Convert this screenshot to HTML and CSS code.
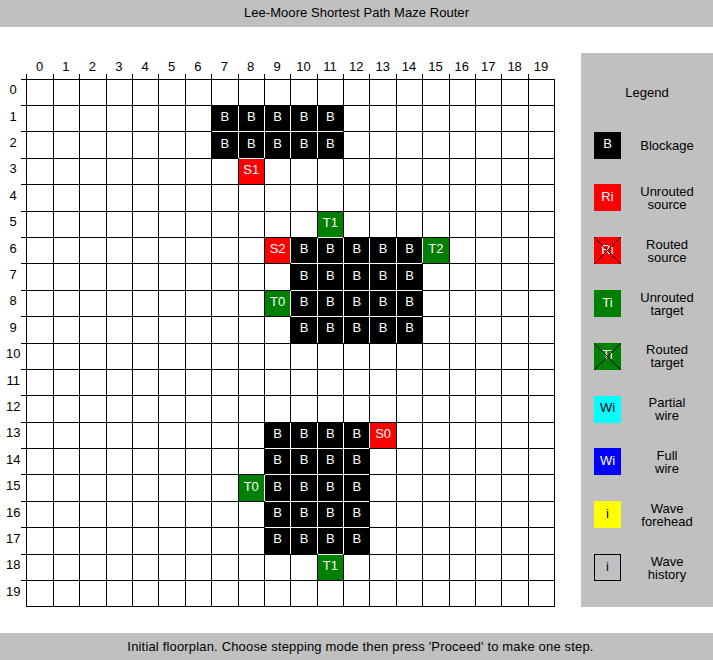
FILE: index.html
```html
<!DOCTYPE html>
<html>
<head>
<meta charset="utf-8">
<title>Lee-Moore Shortest Path Maze Router</title>
<link rel="stylesheet" href="styles.css">
</head>
<body>
<header class="bar title">Lee-Moore Shortest Path Maze Router</header>
<main class="main">
  <section class="chart">
    <div class="corner"></div>
    <div class="cols">
      <span>0</span><span>1</span><span>2</span><span>3</span><span>4</span><span>5</span><span>6</span><span>7</span><span>8</span><span>9</span><span>10</span><span>11</span><span>12</span><span>13</span><span>14</span><span>15</span><span>16</span><span>17</span><span>18</span><span>19</span>
    </div>
    <div class="rows">
      <span>0</span><span>1</span><span>2</span><span>3</span><span>4</span><span>5</span><span>6</span><span>7</span><span>8</span><span>9</span><span>10</span><span>11</span><span>12</span><span>13</span><span>14</span><span>15</span><span>16</span><span>17</span><span>18</span><span>19</span>
    </div>
    <div class="board">
      <span></span><span></span><span></span><span></span><span></span><span></span><span></span><span></span><span></span><span></span><span></span><span></span><span></span><span></span><span></span><span></span><span></span><span></span><span></span><span></span>
      <span></span><span></span><span></span><span></span><span></span><span></span><span></span><span class="k">B</span><span class="k">B</span><span class="k">B</span><span class="k">B</span><span class="k">B</span><span></span><span></span><span></span><span></span><span></span><span></span><span></span><span></span>
      <span></span><span></span><span></span><span></span><span></span><span></span><span></span><span class="k">B</span><span class="k">B</span><span class="k">B</span><span class="k">B</span><span class="k">B</span><span></span><span></span><span></span><span></span><span></span><span></span><span></span><span></span>
      <span></span><span></span><span></span><span></span><span></span><span></span><span></span><span></span><span class="s">S1</span><span></span><span></span><span></span><span></span><span></span><span></span><span></span><span></span><span></span><span></span><span></span>
      <span></span><span></span><span></span><span></span><span></span><span></span><span></span><span></span><span></span><span></span><span></span><span></span><span></span><span></span><span></span><span></span><span></span><span></span><span></span><span></span>
      <span></span><span></span><span></span><span></span><span></span><span></span><span></span><span></span><span></span><span></span><span></span><span class="t">T1</span><span></span><span></span><span></span><span></span><span></span><span></span><span></span><span></span>
      <span></span><span></span><span></span><span></span><span></span><span></span><span></span><span></span><span></span><span class="s">S2</span><span class="k">B</span><span class="k">B</span><span class="k">B</span><span class="k">B</span><span class="k">B</span><span class="t">T2</span><span></span><span></span><span></span><span></span>
      <span></span><span></span><span></span><span></span><span></span><span></span><span></span><span></span><span></span><span></span><span class="k">B</span><span class="k">B</span><span class="k">B</span><span class="k">B</span><span class="k">B</span><span></span><span></span><span></span><span></span><span></span>
      <span></span><span></span><span></span><span></span><span></span><span></span><span></span><span></span><span></span><span class="t">T0</span><span class="k">B</span><span class="k">B</span><span class="k">B</span><span class="k">B</span><span class="k">B</span><span></span><span></span><span></span><span></span><span></span>
      <span></span><span></span><span></span><span></span><span></span><span></span><span></span><span></span><span></span><span></span><span class="k">B</span><span class="k">B</span><span class="k">B</span><span class="k">B</span><span class="k">B</span><span></span><span></span><span></span><span></span><span></span>
      <span></span><span></span><span></span><span></span><span></span><span></span><span></span><span></span><span></span><span></span><span></span><span></span><span></span><span></span><span></span><span></span><span></span><span></span><span></span><span></span>
      <span></span><span></span><span></span><span></span><span></span><span></span><span></span><span></span><span></span><span></span><span></span><span></span><span></span><span></span><span></span><span></span><span></span><span></span><span></span><span></span>
      <span></span><span></span><span></span><span></span><span></span><span></span><span></span><span></span><span></span><span></span><span></span><span></span><span></span><span></span><span></span><span></span><span></span><span></span><span></span><span></span>
      <span></span><span></span><span></span><span></span><span></span><span></span><span></span><span></span><span></span><span class="k">B</span><span class="k">B</span><span class="k">B</span><span class="k">B</span><span class="s">S0</span><span></span><span></span><span></span><span></span><span></span><span></span>
      <span></span><span></span><span></span><span></span><span></span><span></span><span></span><span></span><span></span><span class="k">B</span><span class="k">B</span><span class="k">B</span><span class="k">B</span><span></span><span></span><span></span><span></span><span></span><span></span><span></span>
      <span></span><span></span><span></span><span></span><span></span><span></span><span></span><span></span><span class="t">T0</span><span class="k">B</span><span class="k">B</span><span class="k">B</span><span class="k">B</span><span></span><span></span><span></span><span></span><span></span><span></span><span></span>
      <span></span><span></span><span></span><span></span><span></span><span></span><span></span><span></span><span></span><span class="k">B</span><span class="k">B</span><span class="k">B</span><span class="k">B</span><span></span><span></span><span></span><span></span><span></span><span></span><span></span>
      <span></span><span></span><span></span><span></span><span></span><span></span><span></span><span></span><span></span><span class="k">B</span><span class="k">B</span><span class="k">B</span><span class="k">B</span><span></span><span></span><span></span><span></span><span></span><span></span><span></span>
      <span></span><span></span><span></span><span></span><span></span><span></span><span></span><span></span><span></span><span></span><span></span><span class="t">T1</span><span></span><span></span><span></span><span></span><span></span><span></span><span></span><span></span>
      <span></span><span></span><span></span><span></span><span></span><span></span><span></span><span></span><span></span><span></span><span></span><span></span><span></span><span></span><span></span><span></span><span></span><span></span><span></span><span></span>
    </div>
  </section>
  <aside class="legend">
    <div class="legend-title">Legend</div>
    <div class="item"><div class="sw sw-block">B</div><div class="lbl">Blockage</div></div>
    <div class="item"><div class="sw sw-src">Ri</div><div class="lbl">Unrouted<br>source</div></div>
    <div class="item"><div class="sw sw-src crossed">Ri<svg class="x" width="27" height="27" viewBox="0 0 27 27"><path d="M0 0L27 27M27 0L0 27" stroke="#000" stroke-width="1" fill="none"/></svg></div><div class="lbl">Routed<br>source</div></div>
    <div class="item"><div class="sw sw-tgt">Ti</div><div class="lbl">Unrouted<br>target</div></div>
    <div class="item"><div class="sw sw-tgt crossed">Ti<svg class="x" width="27" height="27" viewBox="0 0 27 27"><path d="M0 0L27 27M27 0L0 27" stroke="#000" stroke-width="1" fill="none"/></svg></div><div class="lbl">Routed<br>target</div></div>
    <div class="item"><div class="sw sw-partial">Wi</div><div class="lbl">Partial<br>wire</div></div>
    <div class="item"><div class="sw sw-full">Wi</div><div class="lbl">Full<br>wire</div></div>
    <div class="item"><div class="sw sw-front">i</div><div class="lbl">Wave<br>forehead</div></div>
    <div class="item"><div class="sw sw-hist">i</div><div class="lbl">Wave<br>history</div></div>
  </aside>
</main>
<footer class="bar status">Initial floorplan. Choose stepping mode then press 'Proceed' to make one step.</footer>
</body>
</html>
```
FILE: styles.css
```css
html, body {
  margin: 0;
  padding: 0;
}
body {
  width: 713px;
  height: 660px;
  overflow: hidden;
  background: #fff;
  color: #000;
  font-family: "Liberation Sans", Arial, sans-serif;
  font-size: 13px;
}
.bar {
  background: #c0c0c0;
  height: 27px;
  display: flex;
  align-items: center;
  justify-content: center;
  white-space: nowrap;
  box-sizing: border-box;
}
.title {
  padding-bottom: 2px;
  letter-spacing: 0.05px;
}
.status {
  padding-left: 8px;
  letter-spacing: 0.17px;
}
.main {
  height: 606px;
  display: flex;
  justify-content: space-between;
}
.chart {
  display: grid;
  grid-template-columns: 26.4px 528px;
  grid-template-rows: 51.6px 528px;
}
.cols {
  display: grid;
  grid-template-columns: repeat(20, 26.4px);
}
.cols span {
  display: flex;
  align-items: flex-end;
  justify-content: center;
  line-height: 15px;
  padding-bottom: 5px;
  background: linear-gradient(#000, #000) left bottom / 1px 5px no-repeat;
}
.rows {
  display: grid;
  grid-template-rows: repeat(20, 26.4px);
}
.rows span {
  display: flex;
  align-items: center;
  justify-content: center;
  padding-bottom: 4px;
  box-sizing: border-box;
  background: linear-gradient(#000, #000) right top / 5px 1px no-repeat;
}
.board {
  display: grid;
  grid-template-columns: repeat(20, 26.4px);
  grid-template-rows: repeat(20, 26.4px);
}
.board span {
  border: 1px solid #000;
  margin: 0 -1px -1px 0;
}
.board .k,
.board .s,
.board .t {
  border: 0;
  margin: 1px 0 0 1px;
  display: flex;
  align-items: center;
  justify-content: center;
  padding-bottom: 4px;
  box-sizing: border-box;
  color: #fff;
}
.board .k { background: #000; }
.board .s { background: #ff0000; }
.board .t { background: #008000; }

.legend {
  width: 132px;
  margin: 26px 0;
  background: #c0c0c0;
  padding: 13px 0;
  box-sizing: border-box;
  display: grid;
  grid-template-rows: repeat(10, 1fr);
}
.legend-title {
  display: flex;
  align-items: center;
  justify-content: center;
}
.item {
  display: flex;
  align-items: center;
  padding-left: 13px;
}
.sw {
  position: relative;
  width: 27px;
  height: 27px;
  box-sizing: border-box;
  display: flex;
  align-items: center;
  justify-content: center;
  padding-bottom: 3px;
  color: #fff;
  flex: none;
}
.sw-block { background: #000; }
.sw-src { background: #ff0000; }
.sw-tgt { background: #008000; }
.sw-partial { background: #00ffff; color: #000; }
.sw-full { background: #0000ff; }
.sw-front { background: #ffff00; color: #000; }
.sw-hist { border: 1px solid #000; color: #000; }
.x {
  position: absolute;
  left: 0;
  top: 0;
}
.lbl {
  flex: 1;
  text-align: center;
  line-height: 13px;
}
```
